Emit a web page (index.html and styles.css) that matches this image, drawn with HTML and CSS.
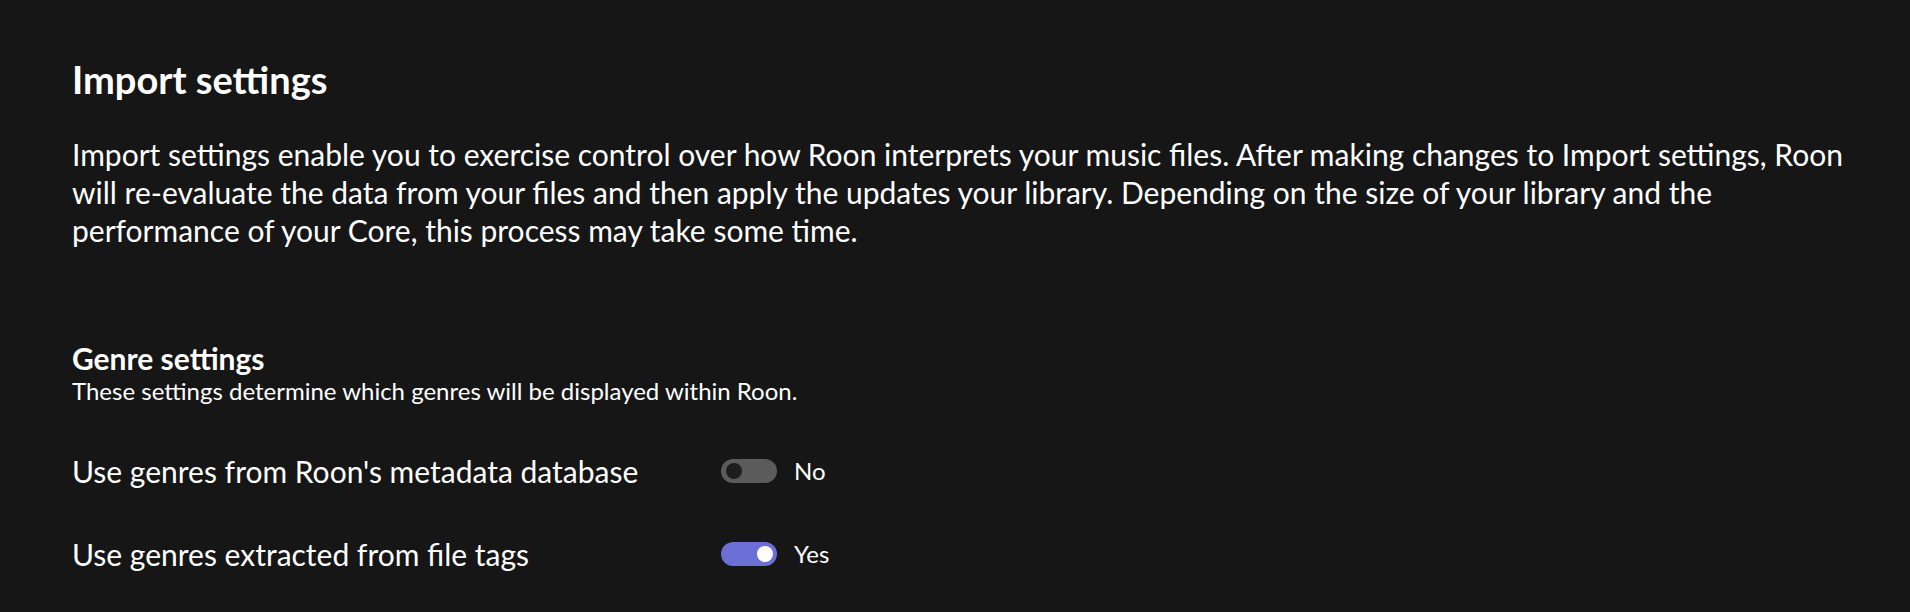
FILE: index.html
```html
<!DOCTYPE html>
<html lang="en">
<head>
<meta charset="utf-8">
<title>Import settings</title>
<link rel="stylesheet" href="styles.css">
</head>
<body>
<main class="page">
  <h1 class="title">Import settings</h1>
  <p class="intro">Import settings enable you to exercise control over how Roon interprets your music files. After making changes to Import settings, Roon will re-evaluate the data from your files and then apply the updates your library. Depending on the size of your library and the performance of your Core, this process may take some time.</p>

  <section class="group">
    <h2 class="group-title">Genre settings</h2>
    <p class="group-desc">These settings determine which genres will be displayed within Roon.</p>

    <div class="row">
      <span class="label">Use genres from Roon's metadata database</span>
      <span class="switch switch-off"><span class="knob"></span></span>
      <span class="value">No</span>
    </div>
    <div class="row">
      <span class="label">Use genres extracted from file tags</span>
      <span class="switch switch-on"><span class="knob"></span></span>
      <span class="value">Yes</span>
    </div>
  </section>
</main>
</body>
</html>
```

FILE: styles.css
```css
html, body {
  margin: 0;
  padding: 0;
  background: #161616;
  height: 100%;
}

body {
  font-family: Lato, "Noto Sans", sans-serif;
  color: #ffffff;
}

.page {
  padding: 56px 20px 0 72px;
}

.title {
  margin: 0;
  font-size: 38px;
  font-weight: 700;
  line-height: 46px;
}

.intro {
  margin: 33px 0 0 0;
  max-width: 1795px;
  font-size: 30px;
  line-height: 38px;
  font-weight: 400;
}

.group {
  margin-top: 91px;
}

.group-title {
  margin: 0;
  font-size: 30px;
  font-weight: 700;
  line-height: 36px;
}

.group-desc {
  margin: 0;
  font-size: 24px;
  line-height: 29px;
}

.row {
  display: grid;
  grid-template-columns: 632px 56px auto;
  column-gap: 17px;
  align-items: center;
  margin-top: 48px;
  font-size: 30px;
  line-height: 36px;
}

.row + .row {
  margin-top: 47px;
}

.row .value {
  font-size: 24px;
}

.switch {
  position: relative;
  display: block;
  width: 56px;
  height: 24px;
  border-radius: 12px;
}

.switch-off {
  background: #5b5b5b;
}

.switch-on {
  background: #6b6fd6;
}

.knob {
  position: absolute;
  top: 4px;
  width: 16px;
  height: 16px;
  border-radius: 50%;
}

.switch-off .knob {
  left: 5px;
  background: #1e1e1e;
}

.switch-on .knob {
  right: 4px;
  background: #ffffff;
}
```
